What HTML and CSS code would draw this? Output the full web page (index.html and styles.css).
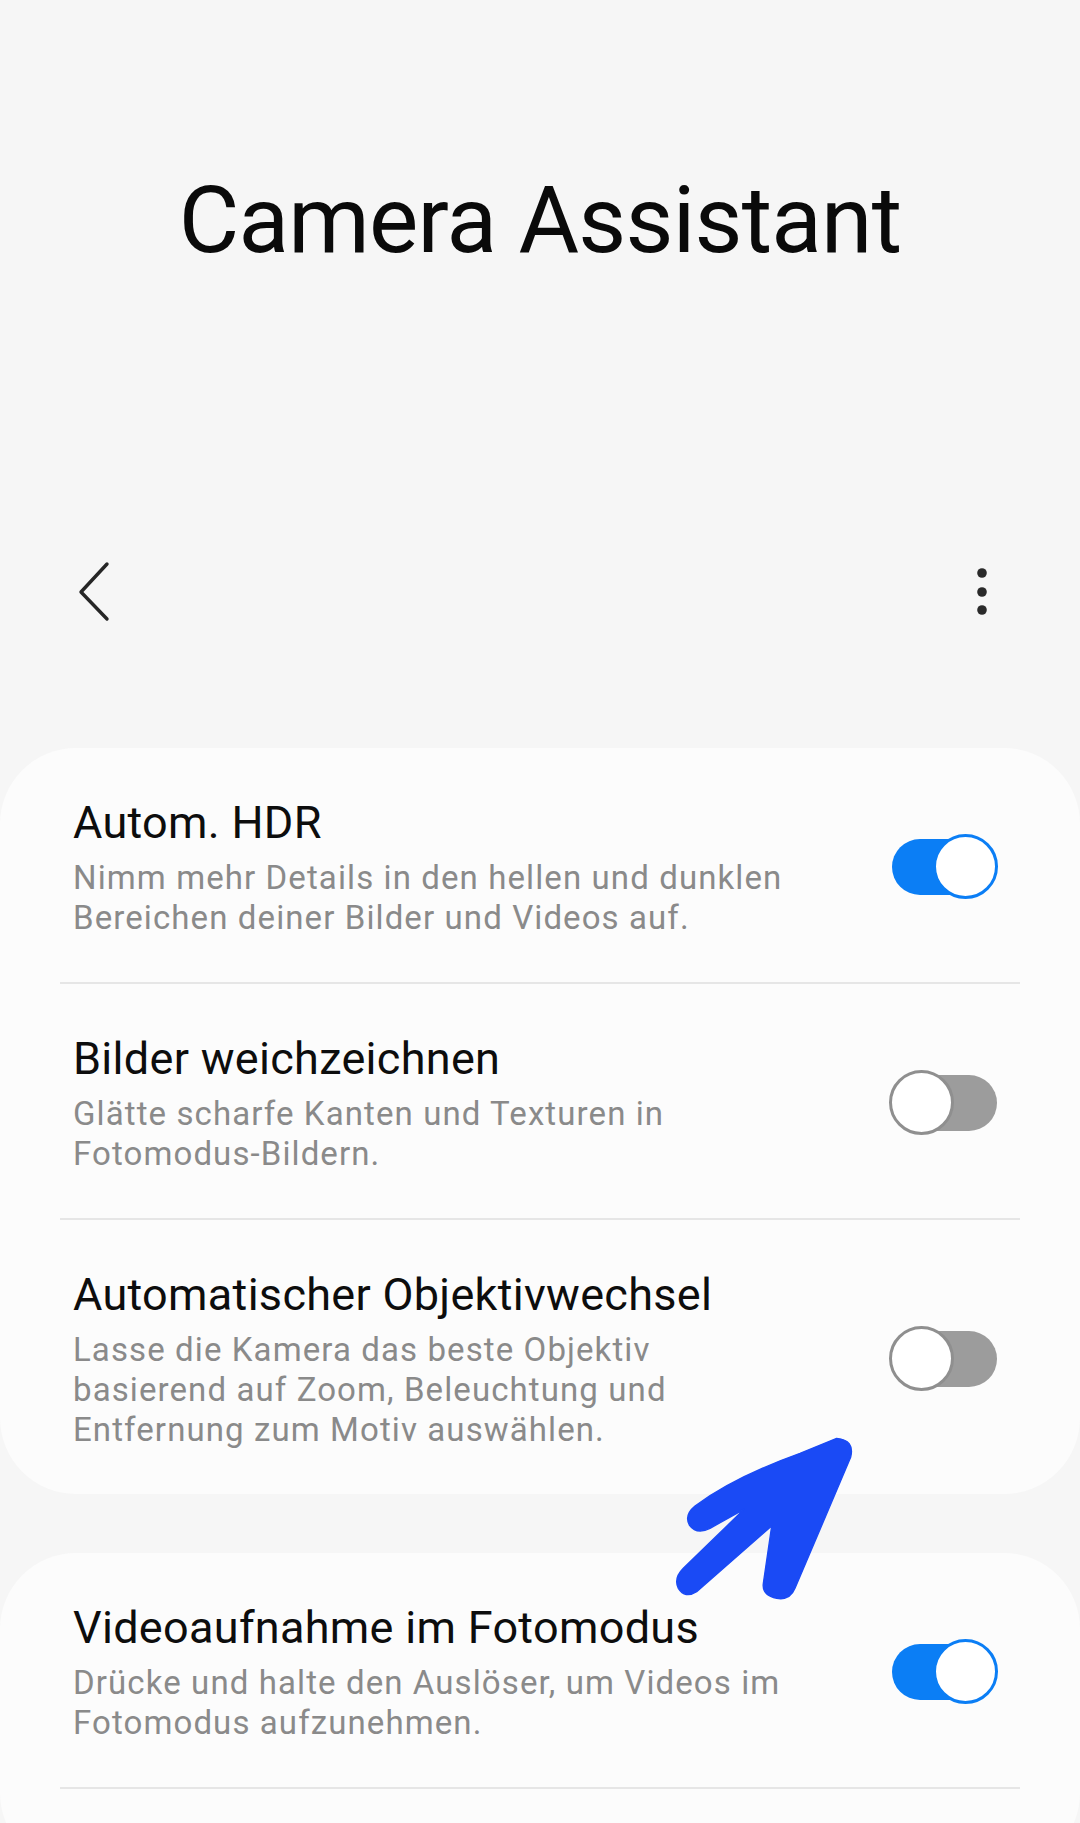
FILE: index.html
```
<!DOCTYPE html>
<html lang="de">
<head>
  <meta charset="UTF-8" />
  <meta name="viewport" content="width=device-width, initial-scale=1.0"/>
  <title>Camera Assistant</title>
  <link rel="stylesheet" href="styles.css">
</head>
<body>
  <header class="app-bar">
    <h1 class="page-title">Camera Assistant</h1>
    <div class="toolbar">
      <svg class="back-icon" width="48" height="64" viewBox="0 0 48 64">
        <path d="M37 4 L11 32 L37 59" fill="none" stroke="#262626" stroke-width="3.4" stroke-linecap="round" stroke-linejoin="round"/>
      </svg>
      <svg class="more-icon" width="20" height="64" viewBox="0 0 20 64">
        <circle cx="10" cy="13" r="4.8" fill="#2a2a2a"/>
        <circle cx="10" cy="32" r="4.8" fill="#2a2a2a"/>
        <circle cx="10" cy="50" r="4.8" fill="#2a2a2a"/>
      </svg>
    </div>
  </header>

  <section class="card">
    <div class="row">
      <div class="row-text">
        <div class="row-title">Autom. HDR</div>
        <div class="row-desc">Nimm mehr Details in den hellen und dunklen<br>Bereichen deiner Bilder und Videos auf.</div>
      </div>
      <div class="switch on"><span class="track"></span><span class="thumb"></span></div>
    </div>
    <div class="row">
      <div class="row-text">
        <div class="row-title">Bilder weichzeichnen</div>
        <div class="row-desc">Glätte scharfe Kanten und Texturen in<br>Fotomodus-Bildern.</div>
      </div>
      <div class="switch"><span class="track"></span><span class="thumb"></span></div>
    </div>
    <div class="row">
      <div class="row-text">
        <div class="row-title">Automatischer Objektivwechsel</div>
        <div class="row-desc">Lasse die Kamera das beste Objektiv<br>basierend auf Zoom, Beleuchtung und<br>Entfernung zum Motiv auswählen.</div>
      </div>
      <div class="switch"><span class="track"></span><span class="thumb"></span></div>
    </div>
  </section>

  <section class="card card-open">
    <div class="row">
      <div class="row-text">
        <div class="row-title">Videoaufnahme im Fotomodus</div>
        <div class="row-desc">Drücke und halte den Auslöser, um Videos im<br>Fotomodus aufzunehmen.</div>
      </div>
      <div class="switch on"><span class="track"></span><span class="thumb"></span></div>
    </div>
  </section>

  <!-- hand drawn marker pointing at the lens switch -->
  <svg class="marker" width="200" height="190" viewBox="0 0 600 570">
    <path d="M530 55 Q585 60 572 112 L405 505 Q390 542 350 535 Q305 525 310 490 L335 318 L110 515 Q75 537 55 505 Q40 475 70 445 L252 268 L150 325 Q110 345 88 315 Q72 285 105 258 Q220 172 420 100 Z" fill="#1a4af5" stroke="#1a4af5" stroke-width="4" stroke-linejoin="round"/>
  </svg>
</body>
</html>
```

FILE: styles.css
```
body {
  margin: 0;
  background: #f6f6f6;
  font-family: Roboto, "Noto Sans", sans-serif;
  color: #111;
  position: relative;
  overflow: hidden;
}
.app-bar {
  padding-top: 166px;
}
.page-title {
  margin: 0;
  font-size: 93px;
  font-weight: 400;
  line-height: 110px;
  letter-spacing: -0.8px;
  text-align: center;
  color: #0a0a0a;
}
.toolbar {
  margin-top: 266px;
  height: 100px;
  display: flex;
  align-items: center;
  justify-content: space-between;
  padding: 0 88px 0 70px;
}
.back-icon,
.more-icon {
  display: block;
}
.card {
  margin-top: 106px;
  background: #fcfcfc;
  border-radius: 76px;
  padding: 0 60px;
}
.card + .card {
  margin-top: 59px;
}
.card-open {
  padding-bottom: 80px;
}
.row {
  display: flex;
  align-items: center;
  justify-content: space-between;
  padding: 47px 22px 44px 13px;
}
.row + .row {
  border-top: 2px solid #e6e6e6;
}
.card-open .row {
  border-bottom: 2px solid #e6e6e6;
}
.row-title {
  font-size: 45px;
  line-height: 56px;
  letter-spacing: 0.3px;
  color: #0d0d0d;
}
.row-desc {
  margin-top: 7px;
  font-size: 33px;
  line-height: 40px;
  letter-spacing: 1.1px;
  color: #8a8a8a;
}
.switch {
  position: relative;
  width: 109px;
  height: 65px;
  flex-shrink: 0;
}
.switch .track {
  position: absolute;
  top: 5px;
  bottom: 4px;
  left: 3px;
  right: 1px;
  border-radius: 28px;
  background: #9c9c9c;
}
.switch .thumb {
  position: absolute;
  top: 0;
  left: 0;
  width: 59px;
  height: 59px;
  border-radius: 50%;
  background: #fff;
  border: 3px solid #8f8f8f;
}
.switch.on .track {
  background: #0b7ef5;
}
.switch.on .thumb {
  left: auto;
  right: 0;
  border-color: #0b7ef5;
}
.marker {
  position: absolute;
  left: 660px;
  top: 1420px;
}
```
